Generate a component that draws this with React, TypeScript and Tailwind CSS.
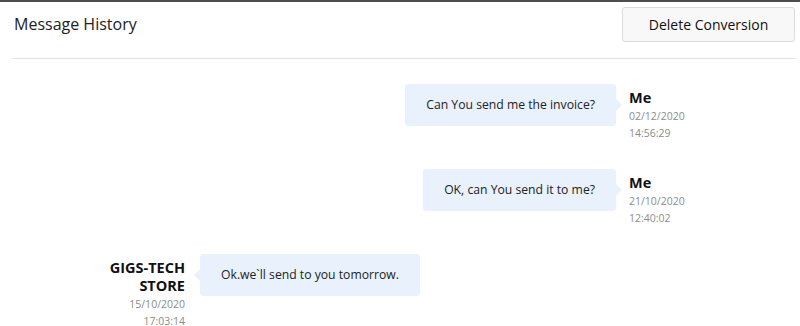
const font = { fontFamily: '"Open Sans", "Noto Sans", sans-serif' };

interface Msg {
    name: string;
    date: string;
    time: string;
    text: string;
    mine: boolean;
}

const messages: Msg[] = [
    { name: "Me", date: "02/12/2020", time: "14:56:29", text: "Can You send me the invoice?", mine: true },
    { name: "Me", date: "21/10/2020", time: "12:40:02", text: "OK, can You send it to me?", mine: true },
    { name: "GIGS-TECH STORE", date: "15/10/2020", time: "17:03:14", text: "Ok.we`ll send to you tomorrow.", mine: false },
];

const Meta = ({ m }: { m: Msg }) => (
    <div className={`w-[100px] pt-[5px] ${m.mine ? "text-left" : "text-right"}`}>
        <div className="text-[14.5px] leading-[18px] font-bold text-[#111]">{m.name}</div>
        <div className="text-[10.5px] leading-[17px] text-[#8c8c8c] mt-[1px]">{m.date}</div>
        <div className="text-[10.5px] leading-[17px] text-[#8c8c8c]">{m.time}</div>
    </div>
);

const Bubble = ({ m }: { m: Msg }) => (
    <div className="relative bg-[#e9f2fc] rounded-[3px] h-[42px] px-[21px] flex items-center text-[12.2px] text-[#222]">
        {m.text}
        {m.mine ? (
            <span className="absolute right-[-6px] top-1/2 -translate-y-1/2 w-0 h-0 border-y-[6px] border-y-transparent border-l-[6px] border-l-[#e9f2fc]" />
        ) : (
            <span className="absolute left-[-6px] top-1/2 -translate-y-1/2 w-0 h-0 border-y-[6px] border-y-transparent border-r-[6px] border-r-[#e9f2fc]" />
        )}
    </div>
);

const App = () => {
    return <div style={font} className="w-[800px] h-[326px] bg-white border-t-2 border-[#4d4d4d] overflow-hidden pl-[13px] pr-[5px]">
        <div className="flex items-center justify-between h-[57px] border-b border-[#e2e2e2] pt-[2px]">
            <h1 className="pl-[1px] text-[16px] text-[#222] -mt-[14px]">Message History</h1>
            <button className="w-[173px] h-[35px] -mt-[14px] bg-[#f8f8f8] border border-[#dcdcdc] rounded-[3px] text-[14px] text-[#111]">
                Delete Conversion
            </button>
        </div>
        <div className="flex flex-col pt-[25px] gap-[28px]">
            {messages.map((m, i) => m.mine ? (
                <div key={i} className="flex justify-end gap-[13px] pr-[66px] h-[57px]">
                    <Bubble m={m} />
                    <Meta m={m} />
                </div>
            ) : (
                <div key={i} className="flex gap-[15px] pl-[72px]">
                    <Meta m={m} />
                    <Bubble m={m} />
                </div>
            ))}
        </div>
    </div>;
}

export default App;
